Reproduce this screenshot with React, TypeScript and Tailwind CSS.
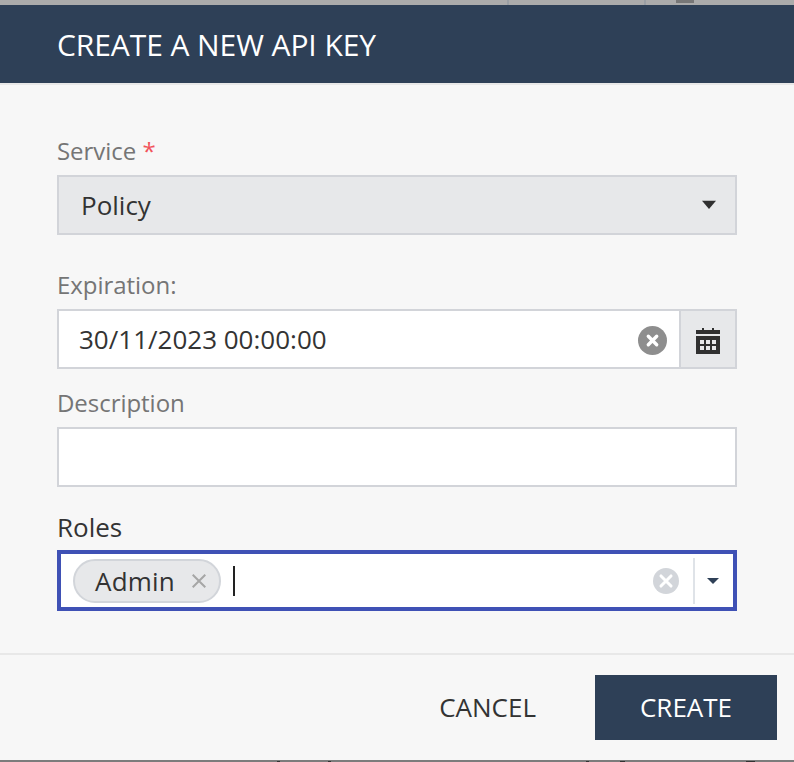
import React from "react";

function ClearIcon({ size, color, cross }: { size: number; color: string; cross: number }) {
  const a = 14.5 - cross;
  const b = 14.5 + cross;
  return (
    <svg width={size} height={size} viewBox="0 0 29 29" className="block shrink-0">
      <circle cx="14.5" cy="14.5" r="14.5" fill={color} />
      <path d={`M${a} ${a}L${b} ${b}M${b} ${a}L${a} ${b}`} stroke="#fff" strokeWidth="3.4" strokeLinecap="round" />
    </svg>
  );
}

function CalendarIcon() {
  return (
    <svg width="24" height="26" viewBox="0 0 24 26" shapeRendering="crispEdges" className="block">
      <path fill="#303030" d="M0 2h6V0h2v2h8V0h2v2h6v4H0zM0 8h24v18H0z" />
      <path fill="#e7e8ea" d="M4 12h4v4H4zM10 12h4v4h-4zM16 12h4v4h-4zM4 18h4v4H4zM10 18h4v4h-4zM16 18h4v4h-4z" />
    </svg>
  );
}

export default function App() {
  return (
    <div className="flex h-[762px] w-[794px] flex-col overflow-hidden bg-[#f7f7f7] font-['Open_Sans',sans-serif] text-[26px] text-[#333]">
      <div className="flex h-[5px] shrink-0 bg-[#ababab]">
        <div className="ml-[507px] h-full w-[2px] bg-[#9a9fa4]" />
        <div className="ml-[135px] h-full w-[2px] bg-[#9a9fa4]" />
        <div className="ml-[30px] h-[3px] w-[18px] bg-[#777]" />
      </div>
      <header className="flex h-20 shrink-0 items-center border-b-2 border-[#e8e8e8] bg-[#2e4057] pl-[57px]">
        <h1 className="pt-0.5 text-[30px] leading-[76px] tracking-[-0.08px] whitespace-nowrap text-white">CREATE A NEW API KEY</h1>
      </header>
      <main className="flex h-[568px] shrink-0 flex-col px-[57px] pt-[42px]">
        <label className="h-12 text-2xl leading-[48px] tracking-[-0.04px] text-[#757575]">
          Service <span className="text-[#f2545b]">*</span>
        </label>
        <div className="flex h-[60px] items-center justify-between border-2 border-[#d2d4d9] bg-[#e7e8ea] pr-[19px] pl-[22px]">
          <span>Policy</span>
          <svg width="14" height="10" viewBox="0 0 14 10" className="block"><path d="M0 .7h14L7 9z" fill="#303030" /></svg>
        </div>
        <label className="mt-[26px] h-12 text-2xl leading-[48px] tracking-[-0.04px] text-[#757575]">Expiration:</label>
        <div className="flex h-[60px] border-2 border-[#d2d4d9] bg-white">
          <div className="flex flex-1 items-center justify-between pr-3 pl-5">
            <span>30/11/2023 00:00:00</span>
            <div className="pt-[3px]">
              <ClearIcon size={29} color="#8e8e8e" cross={4.2} />
            </div>
          </div>
          <div className="flex w-[56px] items-center border-l-2 border-[#d2d4d9] bg-[#e7e8ea] pt-1 pl-[15px]">
            <CalendarIcon />
          </div>
        </div>
        <label className="mt-2.5 h-12 text-2xl leading-[48px] tracking-[-0.04px] text-[#757575]">Description</label>
        <div className="h-[60px] border-2 border-[#d2d4d9] bg-white" />
        <label className="mt-4 h-[47px] leading-[49px]">Roles</label>
        <div className="flex h-[61px] items-center border-4 border-[#3f51b5] bg-white pl-3">
          <div className="flex h-11 w-[148px] items-center justify-between rounded-full border-2 border-[#d2d5da] bg-[#e7e8ea] pr-[13px] pl-5">
            <span className="pt-0.5 tracking-[0.2px]">Admin</span>
            <svg width="14" height="14" viewBox="0 0 14 14"><path d="M.7.7l12.6 12.6M13.3.7L.7 13.3" stroke="#a6a6a6" strokeWidth="2" /></svg>
          </div>
          <div className="ml-3 h-[30px] w-[2px] bg-[#222]" />
          <div className="ml-auto">
            <ClearIcon size={26} color="#d2d5da" cross={5.6} />
          </div>
          <div className="ml-3.5 h-[46px] w-[2px] bg-[#dfe3e8]" />
          <svg width="12" height="7" viewBox="0 0 12 7" className="mr-3.5 ml-3"><path d="M0 1h12L6 7z" fill="#2e4057" /></svg>
        </div>
      </main>
      <footer className="flex h-[107px] shrink-0 items-center justify-end border-t-2 border-[#e8e8e8] pr-[17px]">
        <button className="mr-[59px]">CANCEL</button>
        <button className="h-[65px] w-[182px] bg-[#2e4057] text-white">CREATE</button>
      </footer>
      <div className="flex h-[2px] shrink-0 items-end bg-[#7c7c7c]">
        <div className="ml-[277px] h-px w-[3px] bg-[#333]" />
        <div className="ml-12 h-px w-[3px] bg-[#333]" />
        <div className="ml-[255px] h-px w-[3px] bg-[#333]" />
        <div className="ml-[31px] h-px w-[5px] bg-[#333]" />
        <div className="ml-[121px] h-px w-[9px] bg-[#333]" />
      </div>
    </div>
  );
}
